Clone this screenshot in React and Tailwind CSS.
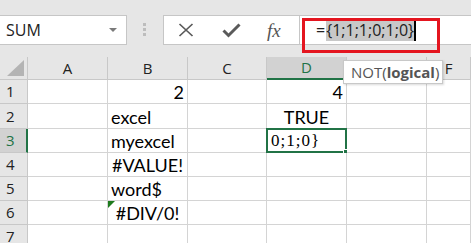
import React from "react";

const G = "border-[#d4d4d4]";

function ColHead({ children, sel }) {
  return (
    <div
      className={
        "flex items-center justify-center text-[15px] border-r border-[#c8c8c8] " +
        (sel
          ? "bg-[#d2d2d2] text-[#217346] border-b-2 border-b-[#217346]"
          : "bg-[#e6e6e6] text-[#222] border-b border-b-[#c8c8c8]")
      }
    >
      {children}
    </div>
  );
}

function RowHead({ n, sel }) {
  return (
    <div
      className={
        "flex items-center pl-[6px] text-[15px] border-b border-[#c8c8c8] " +
        (sel
          ? "bg-[#d2d2d2] text-[#217346] border-r-2 border-r-[#217346]"
          : "bg-[#e6e6e6] text-[#222] border-r border-r-[#c8c8c8]")
      }
    >
      {n}
    </div>
  );
}

function Cell({ children, align = "left", className = "" }) {
  const a =
    align === "right"
      ? "justify-end pr-[3px]"
      : align === "center"
      ? "justify-center"
      : "justify-start pl-[3px]";
  return (
    <div
      className={
        "relative flex items-end bg-white border-r border-b " +
        G +
        " " +
        a +
        " font-['Lato'] text-[18px] leading-[22px] text-black whitespace-nowrap " +
        className
      }
    >
      {children}
    </div>
  );
}

export default function App() {
  const rows = [
    { n: 1, B: { t: "2", a: "right" }, D: { t: "4", a: "right" } },
    { n: 2, B: { t: "excel" }, D: { t: "TRUE", a: "center" } },
    { n: 3, B: { t: "myexcel" }, D: { edit: true } },
    { n: 4, B: { t: "#VALUE!", a: "center" } },
    { n: 5, B: { t: "word$" } },
    { n: 6, B: { t: "#DIV/0!", a: "center", tri: true } },
    { n: 7 },
  ];

  return (
    <div className="relative w-[471px] h-[243px] overflow-hidden bg-[#e6e6e6] font-['Open_Sans',sans-serif]">
      {/* formula bar */}
      <div className="h-[57px] pt-[15px] flex items-start">
        <div className="w-[127px] h-[30px] bg-white border border-l-0 border-[#c6c6c6] flex items-center justify-between pl-[6px] pr-[9px]">
          <span className="text-[16px] text-[#222] leading-none">SUM</span>
          <svg width="8" height="4" viewBox="0 0 8 4">
            <polygon points="0,0 8,0 4,4" fill="#7a7a7a" />
          </svg>
        </div>
        <div className="ml-[16px] mt-[8px] flex flex-col gap-[2px]">
          <div className="w-[3px] h-[3px] bg-[#bdbdbd]" />
          <div className="w-[3px] h-[3px] bg-[#bdbdbd]" />
          <div className="w-[3px] h-[3px] bg-[#bdbdbd]" />
        </div>
        <div className="ml-[17px] w-[137px] h-[30px] bg-white border border-[#c6c6c6] flex items-center">
          <svg className="ml-[14px]" width="16" height="14" viewBox="0 0 16 14">
            <path d="M1.5 1 L14.5 13 M14.5 1 L1.5 13" stroke="#5a5a5a" strokeWidth="1.7" fill="none" />
          </svg>
          <svg className="ml-[28px]" width="19" height="15" viewBox="0 0 19 15">
            <path d="M1.5 7.5 L6.5 12.5 L17.5 1.5" stroke="#5a5a5a" strokeWidth="3" fill="none" />
          </svg>
          <span className="ml-[26px] font-['Liberation_Serif'] italic text-[19px] text-[#555] leading-none">
            fx
          </span>
        </div>
        <div className="flex-1 h-[30px] bg-white border-y border-r-0 border-[#c6c6c6] flex items-center pl-[16px]">
          <span className="text-[16px] text-[#222] leading-[22px]">=</span>
          <span className="ml-[1px] bg-[#c8c8c8] text-[16px] text-[#222] leading-[22px]">
            {"{1;1;1;0;1;0}"}
          </span>
          <span className="w-[1.5px] h-[22px] bg-black" />
        </div>
      </div>

      {/* grid */}
      <div className="grid grid-cols-[28px_80px_80px_79px_80px_80px_1fr] grid-rows-[23px_24px_25px_24px_24px_24px_24px_24px]">
        <div className="bg-[#e6e6e6] border-r border-b border-[#c8c8c8] flex items-end justify-end pr-[3px] pb-[3px]">
          <svg width="17" height="16" viewBox="0 0 17 16">
            <polygon points="17,0 17,16 0,16" fill="#b4b4b4" />
          </svg>
        </div>
        <ColHead>A</ColHead>
        <ColHead>B</ColHead>
        <ColHead>C</ColHead>
        <ColHead sel>D</ColHead>
        <ColHead>E</ColHead>
        <ColHead>F</ColHead>

        {rows.map((r) => (
          <React.Fragment key={r.n}>
            <RowHead n={r.n} sel={r.n === 3} />
            <Cell />
            <Cell align={r.B?.a}>
              {r.B?.tri && (
                <div className="absolute left-0 top-0 w-0 h-0 border-t-[7px] border-t-[#1e7b1e] border-r-[7px] border-r-transparent" />
              )}
              {r.B?.t}
            </Cell>
            <Cell />
            {r.D?.edit ? (
              <Cell className="overflow-visible">
                <div className="absolute -left-[1px] -top-[1px] -right-[1px] -bottom-[1px] border-2 border-[#217346]" />
                <div className="absolute -right-[3px] -bottom-[3px] w-[6px] h-[6px] bg-[#217346] border border-white" />
                <span className="font-['Liberation_Serif'] text-[17px] tracking-[1px] pl-[1px]">
                  {"0;1;0}"}
                </span>
              </Cell>
            ) : (
              <Cell align={r.D?.a}>{r.D?.t}</Cell>
            )}
            <Cell />
            <Cell />
          </React.Fragment>
        ))}
      </div>

      {/* annotation and tooltip overlays */}
      <div className="absolute left-[302px] top-[18px] w-[138px] h-[35px] border-[3px] border-[#e4151f]" />
      <div className="absolute left-[343px] top-[60px] w-[100px] h-[24px] bg-white border border-[#c8c8c8] shadow-[1px_1px_2px_rgba(0,0,0,0.15)] flex items-center pl-[7px] text-[15px] text-[#555] leading-none whitespace-nowrap">
        NOT(<b className="font-bold">logical</b>)
      </div>
    </div>
  );
}
